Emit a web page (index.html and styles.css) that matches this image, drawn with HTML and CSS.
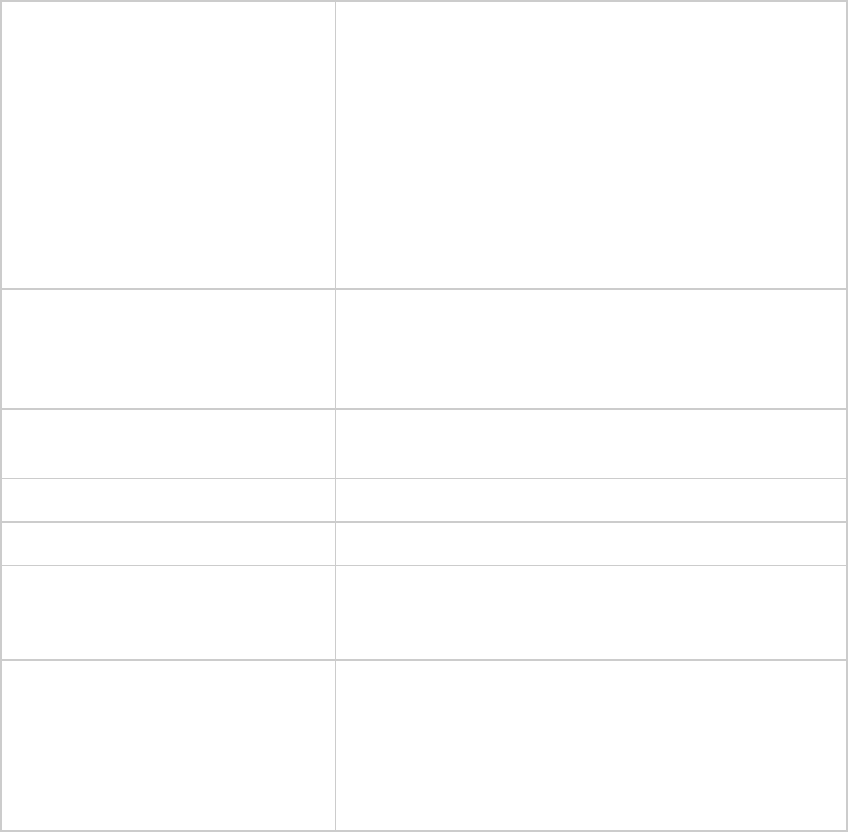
FILE: index.html
```html
<!DOCTYPE html>
<html>
<head>
<meta charset="utf-8">
<link rel="stylesheet" href="styles.css">
</head>
<body>
<div class="table">
  <div class="row h1"><div class="cell"></div><div class="cell"></div></div>
  <div class="row h2 thick"><div class="cell"></div><div class="cell"></div></div>
  <div class="row h3 thick"><div class="cell"></div><div class="cell"></div></div>
  <div class="row h4 thin"><div class="cell"></div><div class="cell"></div></div>
  <div class="row h5 thick"><div class="cell"></div><div class="cell"></div></div>
  <div class="row h6 thin"><div class="cell"></div><div class="cell"></div></div>
  <div class="row h7 thick"><div class="cell"></div><div class="cell"></div></div>
</div>
</body>
</html>
```

FILE: styles.css
```css
html, body {
  margin: 0;
  padding: 0;
  background: #fff;
  font-family: "Liberation Sans", Arial, sans-serif;
}
.table {
  width: 848px;
  height: 832px;
  box-sizing: border-box;
  border: 2px solid #cccccc;
  display: flex;
  flex-direction: column;
}
.row {
  display: grid;
  grid-template-columns: 334px 1fr;
  box-sizing: content-box;
}
.row.thick { border-top: 2px solid #cccccc; }
.row.thin { border-top: 1px solid #cccccc; }
.cell:first-child { border-right: 1px solid #cccccc; }
.h1 { height: 286px; }
.h2 { height: 118px; }
.h3 { height: 68px; }
.h4 { height: 42px; }
.h5 { height: 42px; }
.h6 { height: 93px; }
.h7 { height: 169px; }
```
